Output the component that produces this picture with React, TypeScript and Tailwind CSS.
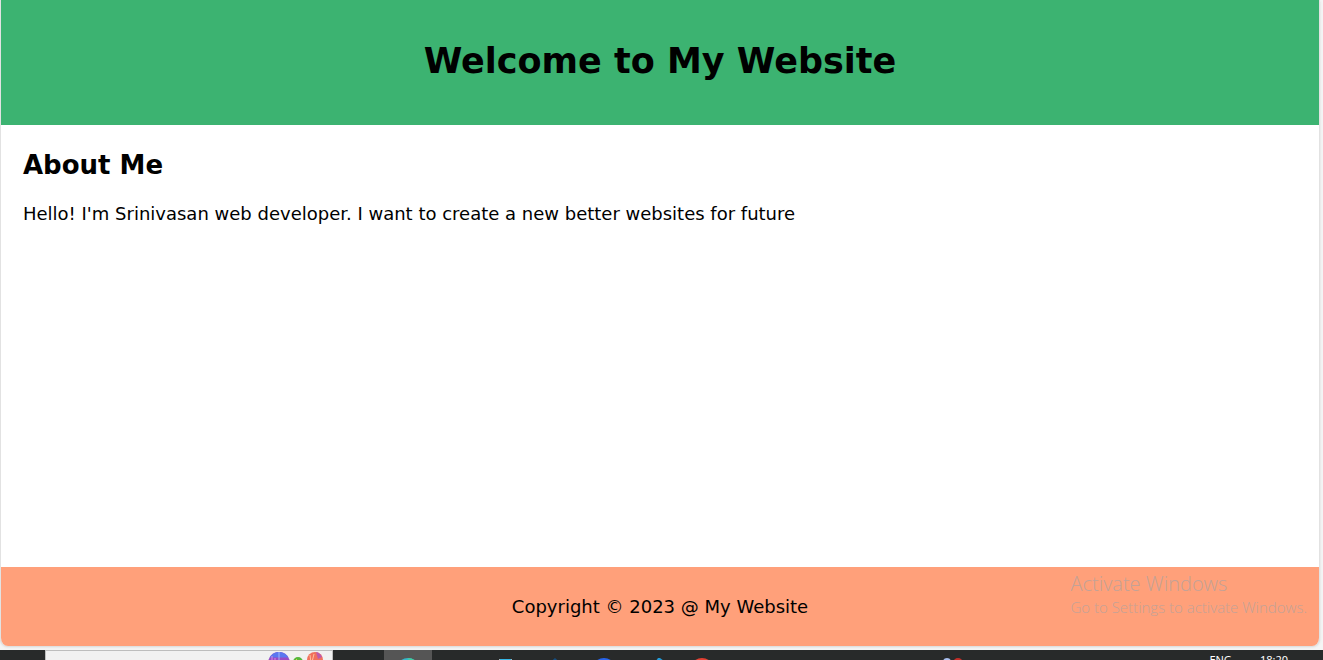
import type { ReactNode } from "react";

function TaskButton({ label, active, children }: { label: string; active?: boolean; children?: ReactNode }) {
  return (
    <button
      aria-label={label}
      className={active ? "h-10 w-12 shrink-0 bg-[#555555]" : "h-10 w-12 shrink-0"}
    >
      <svg viewBox="0 0 48 40" className="block h-10 w-12" aria-hidden="true">
        {children}
      </svg>
    </button>
  );
}

function Taskbar() {
  return (
    <nav aria-label="Taskbar" className="h-[10px] shrink-0 overflow-hidden bg-[#282a2a]">
      <div className="flex h-10 items-start">
        <button aria-label="Start" className="h-10 w-[45px] shrink-0" />
        <button
          aria-label="Search"
          className="mr-[51px] flex h-10 w-72 shrink-0 justify-end border border-[#bdbdbd] bg-[#f1f1f1] pr-2"
        >
          <svg viewBox="0 0 56 38" className="h-[38px] w-14 shrink-0" aria-hidden="true">
            <circle cx="11" cy="12" r="11" fill="#9a4bc4" />
            <path d="M1.5 6.5a11 11 0 0 1 19 0z" fill="#5a78f0" />
            <path d="M11 1v12" stroke="#9fb5fa" strokeWidth="1" />
            <path d="M4 5v9M7 7v9" stroke="#d68be0" strokeWidth="1" />
            <circle cx="30" cy="11" r="5" fill="#55b73c" />
            <path d="M28 8l3 3" stroke="#d9d24a" strokeWidth="1" />
            <circle cx="47" cy="9" r="8" fill="#f2705c" />
            <path d="M48 1a8 8 0 0 1 6 5l-4 2z" fill="#bd5bac" />
            <path d="M42 4l1 8M46 3l-2 8" stroke="#ffc09a" strokeWidth="1" />
          </svg>
        </button>
        <div className="flex gap-px">
          <TaskButton label="Microsoft Edge" active>
            <circle cx="24" cy="20" r="12" fill="#35b8ca" />
            <path d="M24 8a12 12 0 0 1 10 6h-8z" fill="#43cda0" />
          </TaskButton>
          <TaskButton label="Task View" />
          <TaskButton label="Store">
            <path d="M17 9h13v2H17z" fill="#a6b8bd" />
            <path d="M18 9.5h11" stroke="#36b7e6" strokeWidth="1" />
          </TaskButton>
          <TaskButton label="Mail">
            <path d="M24 8l8 7H16z" fill="#164e80" />
          </TaskButton>
          <TaskButton label="Browser">
            <circle cx="24" cy="20" r="12" fill="#2865ed" />
          </TaskButton>
          <TaskButton label="Visual Studio Code">
            <path d="M29 8h2l4 3v16H24v-12z" fill="#239bd7" />
          </TaskButton>
          <TaskButton label="Google Chrome">
            <circle cx="24" cy="20" r="12" fill="#e34133" />
          </TaskButton>
        </div>
        <button aria-label="Weather" className="ml-auto mr-[236px] h-10 w-8">
          <svg viewBox="0 0 32 40" className="block h-10 w-8" aria-hidden="true">
            <circle cx="6" cy="12" r="4" fill="#a9bfef" />
            <circle cx="17" cy="13" r="5" fill="#c42e28" />
          </svg>
        </button>
        <div className="flex gap-7 pr-[35px] pt-1 font-['Noto_Sans',sans-serif] text-[11px] leading-3 text-white">
          <span>ENG</span>
          <time>18:20</time>
        </div>
      </div>
    </nav>
  );
}

export default function App() {
  return (
    <div className="flex min-h-screen flex-col bg-[#f5f5f5] font-['DejaVu_Sans',sans-serif] text-black">
      <div className="mb-1 mr-[3px] flex flex-1 flex-col overflow-hidden rounded-b-lg border-l border-r border-[#e2e2e2] bg-white shadow">
        <header className="bg-[#3cb371] px-5 pb-10 pt-9 text-center">
          <h1 className="pt-px text-[35px] font-bold leading-[48px]">Welcome to My Website</h1>
        </header>
        <main className="flex-1 px-[22px] pt-6">
          <h2 className="text-[26px] font-bold leading-8">About Me</h2>
          <p className="mt-[21px] text-lg leading-6">
            Hello! I'm Srinivasan web developer. I want to create a new better websites for future
          </p>
        </main>
        <footer className="relative bg-[#ffa07a] pb-[27px] pt-7 text-center">
          <p className="text-lg leading-6">Copyright © 2023 @ My Website</p>
          <aside className="absolute right-3 top-1 whitespace-nowrap text-left font-['Open_Sans',sans-serif] font-light text-[#c3a297]">
            <p className="text-[20px] leading-[26px]">Activate Windows</p>
            <p className="text-[15px] leading-5">Go to Settings to activate Windows.</p>
          </aside>
        </footer>
      </div>
      <Taskbar />
    </div>
  );
}
